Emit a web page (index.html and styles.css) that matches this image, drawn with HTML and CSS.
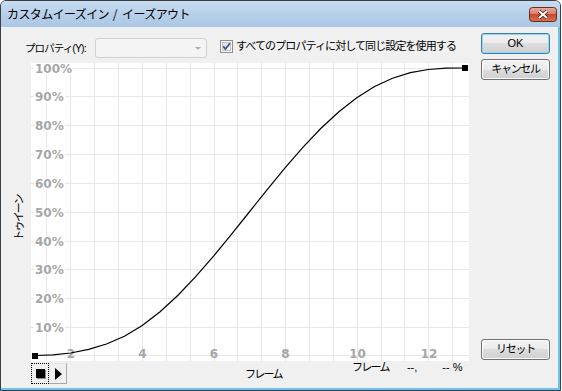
FILE: index.html
```html
<!DOCTYPE html>
<html lang="ja">
<head>
<meta charset="UTF-8">
<title>カスタムイーズイン / イーズアウト</title>
<link rel="stylesheet" href="styles.css">
</head>
<body>
<div class="window">
    <div class="titlebar">
        <span class="title">カスタムイーズイン<span class="slash"> / </span>イーズアウト</span>
        <button class="close">
            <svg width="28" height="15" viewBox="0 0 28 15">
                <defs>
                    <linearGradient id="closeFill" x1="0" y1="0" x2="0" y2="1">
                        <stop offset="0" stop-color="#eab0a2"/>
                        <stop offset="0.45" stop-color="#d87d67"/>
                        <stop offset="0.5" stop-color="#c54a30"/>
                        <stop offset="1" stop-color="#d6744a"/>
                    </linearGradient>
                </defs>
                <rect x="0.5" y="0.5" width="27" height="14" rx="3" fill="url(#closeFill)" stroke="#6b2a1f"/>
                <path d="M10 4L18 11M18 4L10 11" stroke="#4b1a12" stroke-width="3.6"/>
                <path d="M10 4L18 11M18 4L10 11" stroke="#fff" stroke-width="2"/>
            </svg>
        </button>
    </div>
    <div class="client">
        <div class="main">
            <div class="toprow">
                <span class="prop-label">プロパティ(Y):</span>
                <div class="combo"><span class="combo-arrow"></span></div>
                <label class="check">
                    <svg class="check-box" width="13" height="13" viewBox="0 0 13 13">
                        <defs>
                            <linearGradient id="boxFill" x1="0" y1="0" x2="1" y2="1">
                                <stop offset="0" stop-color="#d6d6d6"/>
                                <stop offset="1" stop-color="#ffffff"/>
                            </linearGradient>
                        </defs>
                        <rect x="0.5" y="0.5" width="12" height="12" fill="#f6f6f6" stroke="#8f8f8f"/>
                        <rect x="2.5" y="2.5" width="8" height="8" fill="url(#boxFill)" stroke="#c4c4c4"/>
                        <path d="M3.2 6.3L5.4 9L10 3.2" fill="none" stroke="#3b5594" stroke-width="1.8"/>
                    </svg>
                    <span class="check-text">すべてのプロパティに対して同じ設定を使用する</span>
                </label>
            </div>
            <div class="graphrow">
                <div class="yaxis"><span class="ytitle">トゥイーン</span></div>
                <svg class="graph" width="438" height="298" viewBox="0 0 438 298">
                    <g stroke="#e8e8e8" shape-rendering="crispEdges">
                        <path d="M15.5 0V298M39.5 0V298M63.5 0V298M87.5 0V298M111.5 0V298M135.5 0V298M159.5 0V298M183.5 0V298M206.5 0V298M230.5 0V298M254.5 0V298M278.5 0V298M302.5 0V298M326.5 0V298M350.5 0V298M373.5 0V298M397.5 0V298M421.5 0V298"/>
                        <path d="M0 5.5H438M0 33.5H438M0 62.5H438M0 91.5H438M0 120.5H438M0 149.5H438M0 178.5H438M0 206.5H438M0 235.5H438M0 264.5H438M0 292.5H438"/>
                    </g>
                    <g class="axis-label">
                        <rect x="3" y="0" width="39" height="12" fill="#fff"/>
                        <text x="4" y="10">100%</text>
                        <rect x="3" y="28" width="31" height="12" fill="#fff"/>
                        <text x="4" y="38">90%</text>
                        <rect x="3" y="57" width="31" height="12" fill="#fff"/>
                        <text x="4" y="67">80%</text>
                        <rect x="3" y="86" width="31" height="12" fill="#fff"/>
                        <text x="4" y="96">70%</text>
                        <rect x="3" y="115" width="31" height="12" fill="#fff"/>
                        <text x="4" y="125">60%</text>
                        <rect x="3" y="144" width="31" height="12" fill="#fff"/>
                        <text x="4" y="154">50%</text>
                        <rect x="3" y="173" width="31" height="12" fill="#fff"/>
                        <text x="4" y="183">40%</text>
                        <rect x="3" y="201" width="31" height="12" fill="#fff"/>
                        <text x="4" y="211">30%</text>
                        <rect x="3" y="230" width="31" height="12" fill="#fff"/>
                        <text x="4" y="240">20%</text>
                        <rect x="3" y="259" width="31" height="12" fill="#fff"/>
                        <text x="4" y="269">10%</text>
                        <text x="40" y="295" text-anchor="middle">2</text>
                        <text x="111.5" y="295" text-anchor="middle">4</text>
                        <text x="183" y="295" text-anchor="middle">6</text>
                        <text x="254.5" y="295" text-anchor="middle">8</text>
                        <text x="326.5" y="295" text-anchor="middle">10</text>
                        <text x="398" y="295" text-anchor="middle">12</text>
                    </g>
                    <path d="M4 292.5L21.9 291.8L39.75 290L57.6 286.4L75.5 281L93.4 273.2L111.25 262.5L129.1 248.7L147 232.2L164.9 213.4L182.75 192.9L200.6 171.1L218.5 148.75L236.4 126.4L254.25 104.6L272.1 84.1L290 65.3L307.9 48.8L325.75 34.8L343.6 23.5L361.5 15.2L379.4 9.6L397.25 6.5L415.1 5.2L433 5" fill="none" stroke="#000" stroke-width="1.2"/>
                    <rect x="1" y="290" width="6" height="6" fill="#000"/>
                    <rect x="431" y="2" width="6" height="6" fill="#000"/>
                </svg>
            </div>
            <div class="bottomrow">
                <div class="playback">
                    <button class="pb pb-stop"><span class="stop-sq"></span></button>
                    <button class="pb pb-play"><span class="play-tri"></span></button>
                </div>
                <span class="xtitle">フレーム</span>
                <span class="status">フレーム<span class="st-frame">--,</span><span class="st-pct">-- %</span></span>
            </div>
        </div>
        <div class="side">
            <button class="btn btn-default">OK</button>
            <button class="btn">キャンセル</button>
            <button class="btn btn-reset">リセット</button>
        </div>
    </div>
</div>
</body>
</html>
```

FILE: styles.css
```css
body {
    margin: 0;
    background: #fff;
    font-family: "Liberation Sans", "Noto Sans CJK JP", sans-serif;
    font-size: 11px;
    color: #000;
}
.window {
    width: 561px;
    height: 391px;
    box-sizing: border-box;
    border: 1px solid #3a3f46;
    border-radius: 6px 6px 0 0;
    background: #f0f0f0;
    display: flex;
    flex-direction: column;
    overflow: hidden;
}
.titlebar {
    height: 26px;
    flex: none;
    display: flex;
    align-items: center;
    padding: 0 3px 0 6px;
    background: linear-gradient(#c7dcf0, #b6cfe9 55%, #abc7e5);
}
.title {
    flex: 1;
    font-family: "Noto Sans CJK JP", sans-serif;
    font-size: 12px;
    line-height: 14px;
    letter-spacing: -0.6px;
    color: #000;
}
.title .slash {
    letter-spacing: 1px;
}
.close {
    align-self: flex-start;
    margin-top: 6px;
    width: 28px;
    height: 15px;
    padding: 0;
    border: 0;
    background: none;
}
.close svg {
    display: block;
}
.client {
    flex: 1;
    display: flex;
    border-right: 2px solid #6cc4e8;
    border-bottom: 2px solid #6cc4e8;
}
.main {
    width: 468px;
    display: flex;
    flex-direction: column;
}
.toprow {
    height: 30px;
    padding: 6px 0 0 24px;
    display: flex;
    align-items: center;
}
.prop-label {
    width: 70px;
    white-space: nowrap;
    font-size: 10.5px;
    line-height: 13px;
    letter-spacing: -0.9px;
}
.combo {
    width: 112px;
    height: 20px;
    box-sizing: border-box;
    border: 1px solid #d0d0d0;
    border-radius: 3px;
    background: #f4f4f4;
    display: flex;
    justify-content: flex-end;
    align-items: center;
    padding-right: 5px;
}
.combo-arrow {
    width: 0;
    height: 0;
    border-left: 3px solid transparent;
    border-right: 3px solid transparent;
    border-top: 3px solid #adadad;
}
.check {
    margin-left: 13px;
    margin-bottom: 4px;
    display: flex;
    align-items: center;
}
.check-box {
    display: block;
}
.check-text {
    margin-left: 3px;
    white-space: nowrap;
    line-height: 13px;
    letter-spacing: -0.9px;
}
.graphrow {
    height: 298px;
    display: flex;
}
.yaxis {
    width: 30px;
    display: flex;
    align-items: center;
    justify-content: center;
}
.ytitle {
    display: inline-block;
    margin: 12px 0 0 6px;
    white-space: nowrap;
    line-height: 12px;
    letter-spacing: -1.8px;
    transform: rotate(-90deg);
}
.graph {
    display: block;
    background: #fff;
}
.axis-label text {
    font-family: "DejaVu Sans", sans-serif;
    font-weight: bold;
    font-size: 12px;
    fill: #a6a6a6;
}
.bottomrow {
    height: 27px;
    padding-left: 30px;
    display: flex;
    align-items: flex-start;
}
.playback {
    display: flex;
    margin-top: 2px;
}
.pb {
    height: 21px;
    padding: 0;
    box-sizing: border-box;
    background: #f0f0f0;
    display: flex;
    align-items: center;
    justify-content: center;
}
.pb-stop {
    width: 18px;
    border: 1px dotted #000;
}
.stop-sq {
    width: 9px;
    height: 9px;
    background: #000;
    box-shadow: 1px 1px 0 #8a8a8a;
}
.pb-play {
    width: 18px;
    border: 1px solid;
    border-color: #e4e4e4 #a8a8a8 #a8a8a8 #e4e4e4;
}
.play-tri {
    width: 0;
    height: 0;
    border-left: 7px solid #000;
    border-top: 6px solid transparent;
    border-bottom: 6px solid transparent;
}
.xtitle {
    width: 40px;
    margin: 6px 0 0 178px;
    white-space: nowrap;
    line-height: 14px;
    letter-spacing: -1.7px;
}
.status {
    margin-left: 67px;
    white-space: nowrap;
    line-height: 12px;
    letter-spacing: -1.7px;
}
.st-frame {
    margin-left: 18px;
    letter-spacing: 0;
}
.st-pct {
    margin-left: 25px;
    letter-spacing: 0;
}
.side {
    flex: 1;
    display: flex;
    flex-direction: column;
    gap: 5px;
    padding: 6px 0 28px 12px;
}
.btn {
    width: 69px;
    height: 21px;
    padding: 0;
    border: 1px solid #707070;
    border-radius: 3px;
    background: linear-gradient(#f2f2f2, #ebebeb 50%, #dddddd 50%, #cfcfcf);
    box-shadow: inset 0 0 0 1px #fbfbfb;
    font-family: "Liberation Sans", "Noto Sans CJK JP", sans-serif;
    font-size: 11px;
    line-height: 13px;
    letter-spacing: -1.3px;
    color: #000;
}
.btn-default {
    border-color: #3c7fb1;
    box-shadow: inset 0 0 0 1px #8fd7f4;
    letter-spacing: 0;
}
.btn-reset {
    margin-top: auto;
}
```
